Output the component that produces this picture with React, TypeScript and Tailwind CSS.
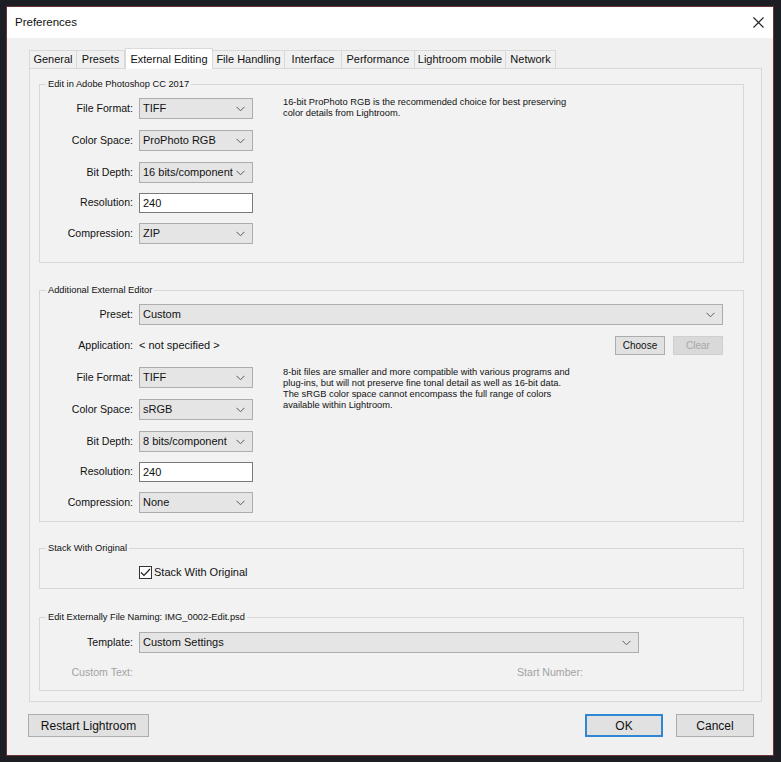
import React from 'react';

const Chevron: React.FC = () => (
  <svg width="9" height="6" viewBox="0 0 9 6" className="shrink-0">
    <polyline points="0.5,0.8 4.5,4.8 8.5,0.8" fill="none" stroke="#5a5a5a" strokeWidth="1" />
  </svg>
);

const Select: React.FC<{ value: string; w: string }> = ({ value, w }) => (
  <div className={`${w} h-[21px] flex items-center justify-between border border-[#adadad] bg-[#e5e5e5] pl-[3px] pr-[7px] text-[11px] text-[#111]`}>
    <span>{value}</span>
    <Chevron />
  </div>
);

const Label: React.FC<{ children: React.ReactNode; muted?: boolean }> = ({ children, muted }) => (
  <span className={`w-[93px] text-right text-[10.6px] ${muted ? 'text-[#a3a3a3]' : 'text-[#111]'}`}>{children}</span>
);

const Row: React.FC<{ label: string; className?: string; children: React.ReactNode }> = ({ label, className = '', children }) => (
  <div className={`flex items-center gap-[6px] ${className}`}>
    <Label>{label}</Label>
    {children}
  </div>
);

const Input: React.FC<{ value: string }> = ({ value }) => (
  <div className="w-[114px] h-[20px] flex items-center border border-[#7a7a7a] bg-white pl-[3px] text-[11px] text-[#111]">{value}</div>
);

const Group: React.FC<{ legend: string; className?: string; children: React.ReactNode }> = ({ legend, className = '', children }) => (
  <fieldset className={`border border-[#d7d7d7] ${className}`}>
    <legend className="ml-[6px] px-[2px] text-[9.3px] leading-[14px] text-[#111]">{legend}</legend>
    {children}
  </fieldset>
);

const tabs = [
  { name: 'General', w: 'w-[48px]' },
  { name: 'Presets', w: 'w-[48px]' },
  { name: 'External Editing', w: 'w-[88px]', active: true },
  { name: 'File Handling', w: 'w-[72px]' },
  { name: 'Interface', w: 'w-[57px]' },
  { name: 'Performance', w: 'w-[73px]' },
  { name: 'Lightroom mobile', w: 'w-[91px]' },
  { name: 'Network', w: 'w-[50px]' },
];

const Button: React.FC<{ children: React.ReactNode; className: string }> = ({ children, className }) => (
  <div className={`flex items-center justify-center bg-[#e1e1e1] text-[#111] ${className}`}>{children}</div>
);

export default function App() {
  return (
    <div className="w-[781px] h-[762px] bg-[#1d1e24] pt-[6px] pl-[6px] font-['Liberation_Sans',Arial,sans-serif]">
      <div className="w-[768px] h-[750px] border border-[#6a3434] bg-[#f0f0f0] flex flex-col">
        {/* title bar */}
        <div className="h-[31px] bg-white flex items-center justify-between pl-[8px] pr-[9px]">
          <span className="text-[11.5px] text-[#111]">Preferences</span>
          <svg width="11" height="11" viewBox="0 0 11 11">
            <path d="M0.5 0.5 L10.5 10.5 M10.5 0.5 L0.5 10.5" stroke="#222" strokeWidth="1.1" />
          </svg>
        </div>

        <div className="pl-[22px] pr-[11px] pt-[10px]">
          {/* tabs */}
          <div className="flex items-end h-[20px]">
            {tabs.map((t) =>
              t.active ? (
                <div key={t.name} className={`${t.w} h-[21px] -mb-px z-10 relative bg-white border border-b-0 border-[#d9d9d9] flex items-center justify-center text-[11px] text-[#111]`}>
                  {t.name}
                </div>
              ) : (
                <div key={t.name} className={`${t.w} h-[18px] bg-[#f0f0f0] border border-b-0 border-l-0 first:border-l border-[#d9d9d9] flex items-center justify-center text-[11px] text-[#111]`}>
                  {t.name}
                </div>
              )
            )}
          </div>

          {/* panel */}
          <div className="h-[634px] border border-[#d9d9d9] bg-[#f2f2f2] pl-[9px] pr-[17px] pt-[8px]">
            <Group legend="Edit in Adobe Photoshop CC 2017">
              <div className="flex items-start pt-[7px] pb-[18px]">
                <div className="flex flex-col w-[213px]">
                  <Row label="File Format:"><Select value="TIFF" w="w-[114px]" /></Row>
                  <Row label="Color Space:" className="mt-[11px]"><Select value="ProPhoto RGB" w="w-[114px]" /></Row>
                  <Row label="Bit Depth:" className="mt-[11px]"><Select value="16 bits/component" w="w-[114px]" /></Row>
                  <Row label="Resolution:" className="mt-[10px]"><Input value="240" /></Row>
                  <Row label="Compression:" className="mt-[10px]"><Select value="ZIP" w="w-[114px]" /></Row>
                </div>
                <p className="ml-[30px] mt-[-1px] text-[9.3px] leading-[11px] text-[#111]">
                  16-bit ProPhoto RGB is the recommended choice for best preserving<br />
                  color details from Lightroom.
                </p>
              </div>
            </Group>

            <Group legend="Additional External Editor" className="mt-[20px]">
              <div className="pt-[7px] pb-[8px] pr-[20px]">
                <Row label="Preset:"><Select value="Custom" w="flex-1" /></Row>
                <div className="flex items-center h-[19px] mt-[11px]">
                  <Row label="Application:" className="flex-1">
                    <span className="text-[11px] text-[#111]">&lt; not specified &gt;</span>
                  </Row>
                  <Button className="w-[50px] h-[19px] border border-[#adadad] text-[10px]">Choose</Button>
                  <div className="ml-[8px] w-[50px] h-[19px] flex items-center justify-center bg-[#d9d9d9] border border-[#cfcfcf] text-[10px] text-[#a8a8a8]">Clear</div>
                </div>
                <div className="flex items-start mt-[12px]">
                  <div className="flex flex-col w-[213px]">
                    <Row label="File Format:"><Select value="TIFF" w="w-[114px]" /></Row>
                    <Row label="Color Space:" className="mt-[11px]"><Select value="sRGB" w="w-[114px]" /></Row>
                    <Row label="Bit Depth:" className="mt-[11px]"><Select value="8 bits/component" w="w-[114px]" /></Row>
                    <Row label="Resolution:" className="mt-[10px]"><Input value="240" /></Row>
                    <Row label="Compression:" className="mt-[10px]"><Select value="None" w="w-[114px]" /></Row>
                  </div>
                  <p className="ml-[30px] mt-[0px] text-[9.3px] leading-[11px] text-[#111]">
                    8-bit files are smaller and more compatible with various programs and<br />
                    plug-ins, but will not preserve fine tonal detail as well as 16-bit data.<br />
                    The sRGB color space cannot encompass the full range of colors<br />
                    available within Lightroom.
                  </p>
                </div>
              </div>
            </Group>

            <Group legend="Stack With Original" className="mt-[19px]">
              <div className="flex items-center h-[14px] mt-[10px] mb-[9px] pl-[99px]">
                <div className="w-[13px] h-[13px] border border-[#333] bg-white flex items-center justify-center">
                  <svg width="11" height="9" viewBox="0 0 11 9">
                    <polyline points="1,4.5 4,7.5 10,1" fill="none" stroke="#222" strokeWidth="1.2" />
                  </svg>
                </div>
                <span className="ml-[2px] text-[11px] text-[#111]">Stack With Original</span>
              </div>
            </Group>

            <Group legend="Edit Externally File Naming:  IMG_0002-Edit.psd" className="mt-[21px]">
              <div className="pt-[8px] pb-[10px]">
                <Row label="Template:"><Select value="Custom Settings" w="w-[500px]" /></Row>
                <div className="flex items-center h-[14px] mt-[13px]">
                  <Label muted>Custom Text:</Label>
                  <span className="ml-[384px] whitespace-nowrap text-[10.6px] text-[#a3a3a3]">Start Number:</span>
                </div>
              </div>
            </Group>
          </div>
        </div>

        {/* footer buttons */}
        <div className="flex items-center pl-[21px] pr-[19px] mt-[12px]">
          <Button className="w-[121px] h-[23px] border border-[#adadad] text-[12px]">Restart Lightroom</Button>
          <div className="flex-1" />
          <Button className="w-[78px] h-[23px] border-2 border-[#2f86d2] text-[12px]">OK</Button>
          <Button className="w-[78px] h-[23px] ml-[13px] border border-[#adadad] text-[12px]">Cancel</Button>
        </div>
      </div>
    </div>
  );
}
